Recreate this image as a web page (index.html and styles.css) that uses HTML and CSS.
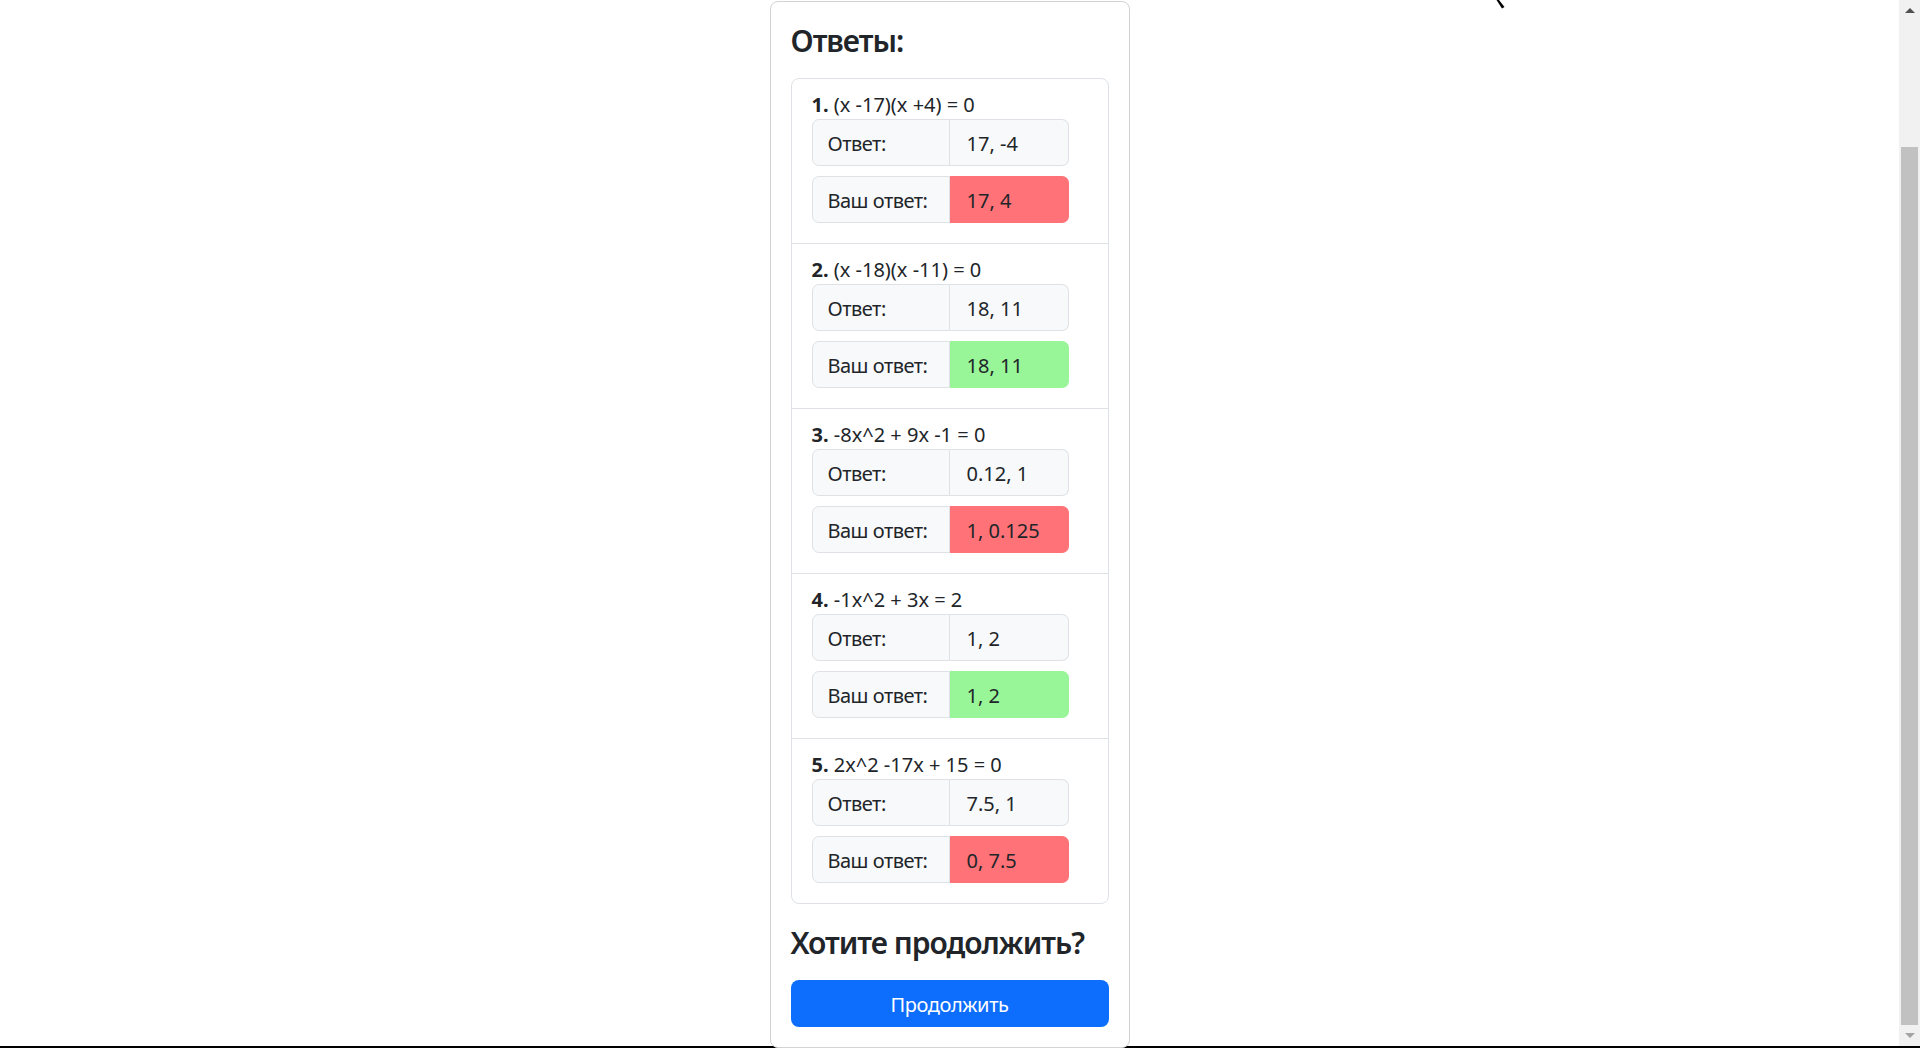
FILE: index.html
```html
<!DOCTYPE html>
<html lang="ru">
<head>
<meta charset="utf-8">
<title>Ответы</title>
<link rel="stylesheet" href="styles.css">
</head>
<body>
<div class="screen">
  <main class="content">
    <section class="card">
      <h4 class="title">Ответы:</h4>
      <ul class="list">
        <li class="item">
          <div class="question"><b>1.</b> (x -17)(x +4) = 0</div>
          <div class="ig"><span class="ig-label">Ответ:</span><span class="ig-value">17, -4</span></div>
          <div class="ig"><span class="ig-label">Ваш ответ:</span><span class="ig-value wrong">17, 4</span></div>
        </li>
        <li class="item">
          <div class="question"><b>2.</b> (x -18)(x -11) = 0</div>
          <div class="ig"><span class="ig-label">Ответ:</span><span class="ig-value">18, 11</span></div>
          <div class="ig"><span class="ig-label">Ваш ответ:</span><span class="ig-value right">18, 11</span></div>
        </li>
        <li class="item">
          <div class="question"><b>3.</b> -8x^2 + 9x -1 = 0</div>
          <div class="ig"><span class="ig-label">Ответ:</span><span class="ig-value">0.12, 1</span></div>
          <div class="ig"><span class="ig-label">Ваш ответ:</span><span class="ig-value wrong">1, 0.125</span></div>
        </li>
        <li class="item">
          <div class="question"><b>4.</b> -1x^2 + 3x = 2</div>
          <div class="ig"><span class="ig-label">Ответ:</span><span class="ig-value">1, 2</span></div>
          <div class="ig"><span class="ig-label">Ваш ответ:</span><span class="ig-value right">1, 2</span></div>
        </li>
        <li class="item">
          <div class="question"><b>5.</b> 2x^2 -17x + 15 = 0</div>
          <div class="ig"><span class="ig-label">Ответ:</span><span class="ig-value">7.5, 1</span></div>
          <div class="ig"><span class="ig-label">Ваш ответ:</span><span class="ig-value wrong">0, 7.5</span></div>
        </li>
      </ul>
      <h4 class="title">Хотите продолжить?</h4>
      <button class="btn" type="button">Продолжить</button>
    </section>
    <svg class="cursor" width="10" height="10" viewBox="0 0 10 10"><path d="M0.5 0 L3 0 L8.5 7 L6 8.5 Z" fill="#000"/></svg>
  </main>
  <div class="scrollbar">
    <div class="sb-btn"><span class="arrow-up"></span></div>
    <div class="sb-track"><div class="sb-thumb"></div></div>
    <div class="sb-btn"><span class="arrow-down"></span></div>
  </div>
</div>
<div class="strip"></div>
</body>
</html>
```

FILE: styles.css
```css
* { box-sizing: border-box; }

html, body {
  margin: 0;
  padding: 0;
}

body {
  font-family: "Noto Sans", "Open Sans", sans-serif;
  color: #212529;
  background: #fff;
  font-size: 20px;
  line-height: 1.5;
  height: 1048px;
  overflow: hidden;
}

.screen {
  display: flex;
  height: 1046px;
}

.content {
  flex: 1;
  position: relative;
  display: flex;
  justify-content: center;
  align-items: flex-start;
  padding-top: 1px;
}

.card {
  width: 360px;
  border: 1px solid #d3d3d3;
  border-radius: 8px;
  padding: 20px;
  background: #fff;
}

.title {
  margin: 0 0 20px;
  padding-top: 1px;
  font-size: 30px;
  font-weight: 600;
  line-height: 35px;
  letter-spacing: -1px;
}

.list {
  list-style: none;
  margin: 0 0 20px;
  padding: 0;
  border: 1px solid #dee2e6;
  border-radius: 8px;
}

.item {
  padding: 10px 20px;
}

.item + .item {
  border-top: 1px solid #dee2e6;
}

.question {
  padding-top: 1px;
  line-height: 29px;
  white-space: nowrap;
}

.question b {
  font-weight: 700;
}

.ig {
  display: flex;
  width: 257px;
  height: 47px;
  margin-bottom: 10px;
}

.ig-label,
.ig-value {
  display: flex;
  align-items: center;
  padding: 2px 15px 0;
  border: 1px solid #dee2e6;
  background: #f8f9fa;
  white-space: nowrap;
}

.ig-label {
  width: 138px;
  letter-spacing: -0.5px;
  border-radius: 7px 0 0 7px;
}

.ig-value {
  flex: 1;
  border-left: 0;
  padding-left: 17px;
  border-radius: 0 7px 7px 0;
}

.ig-value.wrong {
  background: #ff7378;
  border-color: #ff7378;
}

.ig-value.right {
  background: #98f598;
  border-color: #98f598;
}

.btn {
  display: block;
  width: 100%;
  height: 47px;
  padding-top: 3px;
  border: 0;
  border-radius: 8px;
  background: #0d6efd;
  color: #fff;
  font-family: inherit;
  font-size: 20px;
  line-height: 30px;
  letter-spacing: -0.4px;
  cursor: pointer;
}

.cursor {
  position: absolute;
  left: 1496px;
  top: 0;
}

.scrollbar {
  width: 21px;
  display: flex;
  flex-direction: column;
  background: #f1f1f1;
}

.sb-btn {
  height: 21px;
  display: flex;
  align-items: center;
  justify-content: center;
}

.arrow-up {
  width: 0;
  height: 0;
  border-left: 5px solid transparent;
  border-right: 5px solid transparent;
  border-bottom: 5px solid #505050;
}

.arrow-down {
  width: 0;
  height: 0;
  border-left: 5px solid transparent;
  border-right: 5px solid transparent;
  border-top: 5px solid #a3a3a3;
}

.sb-track {
  flex: 1;
  display: flex;
  flex-direction: column;
  justify-content: flex-end;
  padding: 0 2px;
}

.sb-thumb {
  height: 878px;
  background: #c1c1c1;
}

.strip {
  height: 2px;
  background: #000;
}
```
